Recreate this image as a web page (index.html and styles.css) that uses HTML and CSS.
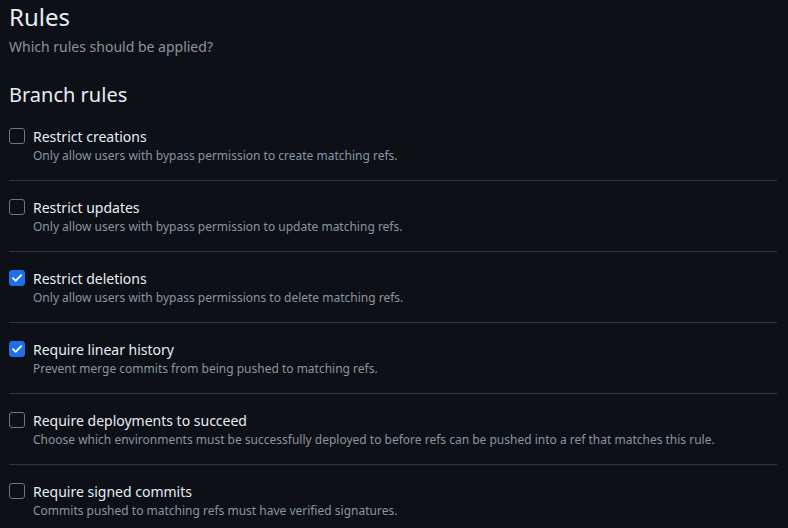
FILE: index.html
```html
<!DOCTYPE html>
<html>
<head>
<meta charset="utf-8">
<link rel="stylesheet" href="styles.css">
</head>
<body>
<div class="page">
  <header class="head">
    <h1 class="title">Rules</h1>
    <p class="subtitle">Which rules should be applied?</p>
  </header>
  <h2 class="section">Branch rules</h2>
  <ul class="rules">
    <li class="rule">
      <span class="box"></span>
      <div class="text">
        <div class="label">Restrict creations</div>
        <div class="desc">Only allow users with bypass permission to create matching refs.</div>
      </div>
    </li>
    <li class="rule">
      <span class="box"></span>
      <div class="text">
        <div class="label">Restrict updates</div>
        <div class="desc">Only allow users with bypass permission to update matching refs.</div>
      </div>
    </li>
    <li class="rule">
      <span class="box checked"><svg viewBox="0 0 16 16" width="16" height="16"><path d="M4 8.2l2.6 2.6L12.2 5.2" fill="none" stroke="#fff" stroke-width="1.8" stroke-linecap="round" stroke-linejoin="round"/></svg></span>
      <div class="text">
        <div class="label">Restrict deletions</div>
        <div class="desc">Only allow users with bypass permissions to delete matching refs.</div>
      </div>
    </li>
    <li class="rule">
      <span class="box checked"><svg viewBox="0 0 16 16" width="16" height="16"><path d="M4 8.2l2.6 2.6L12.2 5.2" fill="none" stroke="#fff" stroke-width="1.8" stroke-linecap="round" stroke-linejoin="round"/></svg></span>
      <div class="text">
        <div class="label">Require linear history</div>
        <div class="desc">Prevent merge commits from being pushed to matching refs.</div>
      </div>
    </li>
    <li class="rule">
      <span class="box"></span>
      <div class="text">
        <div class="label">Require deployments to succeed</div>
        <div class="desc">Choose which environments must be successfully deployed to before refs can be pushed into a ref that matches this rule.</div>
      </div>
    </li>
    <li class="rule">
      <span class="box"></span>
      <div class="text">
        <div class="label">Require signed commits</div>
        <div class="desc">Commits pushed to matching refs must have verified signatures.</div>
      </div>
    </li>
  </ul>
</div>
</body>
</html>
```

FILE: styles.css
```css
html, body {
  margin: 0;
  padding: 0;
  background: #0d1117;
}
body {
  font-family: "Noto Sans", "Open Sans", sans-serif;
  color: #e6edf3;
}
.page {
  padding: 2px 11px 0 9px;
}
.title {
  margin: 0;
  font-size: 24px;
  font-weight: 400;
  line-height: 30px;
}
.subtitle {
  margin: 5px 0 0;
  font-size: 14px;
  line-height: 20px;
  color: #8b949e;
}
.section {
  margin: 23px 0 0;
  font-size: 20px;
  font-weight: 400;
  line-height: 30px;
}
.rules {
  list-style: none;
  margin: 0;
  padding: 0;
}
.rule {
  display: flex;
  gap: 8px;
  padding: 17px 0 15px;
  border-bottom: 1px solid #30363d;
}
.rule:last-child {
  border-bottom: none;
}
.box {
  flex: none;
  width: 16px;
  height: 16px;
  margin-top: 1px;
  box-sizing: border-box;
  border: 1px solid #6e7681;
  border-radius: 3px;
  display: flex;
}
.box.checked {
  background: #1f6feb;
  border-color: #1f6feb;
}
.box svg {
  margin: -1px;
}
.label {
  font-size: 14px;
  line-height: 20px;
}
.desc {
  font-size: 12px;
  line-height: 18px;
  color: #8b949e;
}
```
